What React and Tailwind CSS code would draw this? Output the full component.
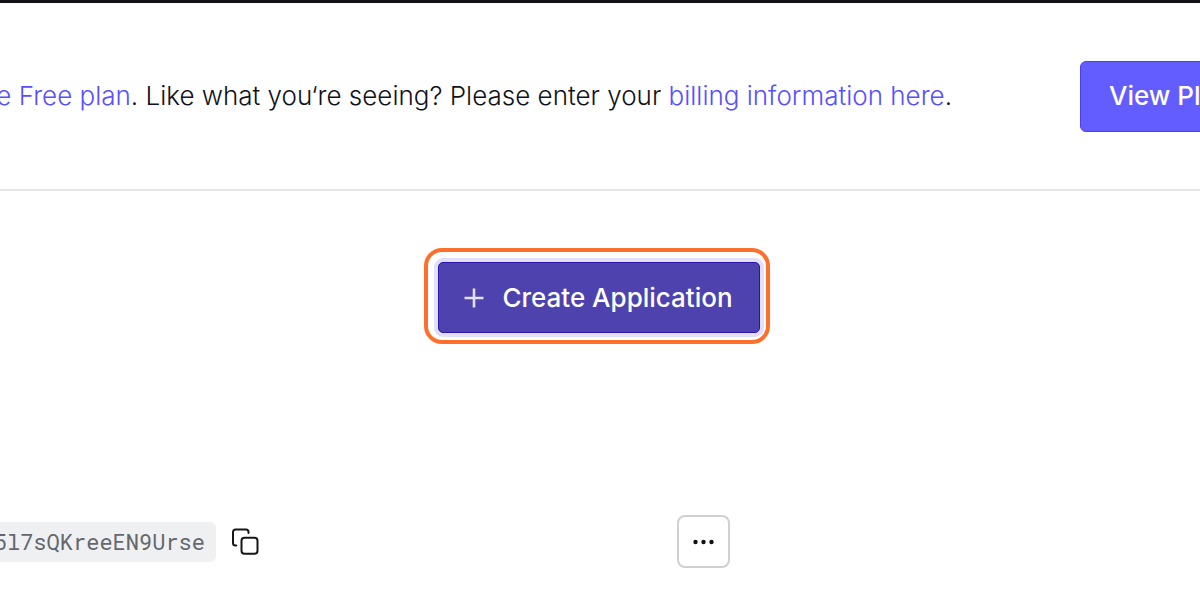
function CopyIcon() {
  return (
    <svg width="27" height="27" viewBox="0 0 27 27" fill="none" stroke="#16161a" strokeWidth="2" strokeLinecap="round" strokeLinejoin="round" aria-hidden="true">
      <rect x="9.500" y="9.800" width="16" height="16" rx="3" />
      <path d="M4.300 17.500H3.500a2.500 2.500 0 0 1-2.500-2.500V4A2.500 2.500 0 0 1 3.500 1.500h10.500A2.500 2.500 0 0 1 16.500 4v1" />
    </svg>
  );
}

function PlusIcon() {
  return (
    <svg width="20" height="20" viewBox="0 0 20 20" fill="none" stroke="#e4e1f5" strokeWidth="2.600" aria-hidden="true">
      <path d="M10 .5v19M.5 10h19" />
    </svg>
  );
}

function DotsIcon() {
  return (
    <svg width="24" height="6" viewBox="0 0 24 6" fill="#111114" aria-hidden="true">
      <circle cx="3.500" cy="3" r="2.200" />
      <circle cx="11.500" cy="3" r="2.200" />
      <circle cx="19.500" cy="3" r="2.200" />
    </svg>
  );
}

function PlanBanner() {
  return (
    <section className="flex h-[188px] items-center gap-32 border-b-2 border-[#e5e5e8]">
      <div className="flex min-w-0 flex-1 justify-end overflow-hidden">
        <p className="shrink-0 whitespace-nowrap text-[26px] font-light leading-8 text-[#10121a]">
          <a href="#plan" className="text-[#5850ff]">he Free plan</a>. Like what you‘re seeing? Please enter your{" "}
          <a href="#billing" className="text-[#5850ff]">billing information here</a>.
        </p>
      </div>
      <div className="w-[10%] shrink-0">
        <button type="button" className="h-[71px] whitespace-nowrap rounded-md border border-[#4b40ee] bg-[#635dff] px-7 text-[26px] font-medium leading-8 text-white">
          View Plans
        </button>
      </div>
    </section>
  );
}

export default function App() {
  return (
    <main className="overflow-hidden border-t-3 border-[#111116] bg-white font-['Inter',sans-serif]">
      <PlanBanner />
      <section className="flex justify-center pt-[57px] pr-[6px]">
        <div className="rounded-[18px] border-4 border-[#ff6f2c] pt-[10px] pr-[6px] pb-[7px] pl-[10px]">
          <button type="button" className="flex h-[71px] items-center gap-[18px] rounded-[5px] border border-[#2f13ad] bg-[#4d42ae] pr-[26px] pl-[25px] text-[26px] font-medium leading-8 text-white ring-4 ring-[#e1dffc]">
            <PlusIcon />
            Create Application
          </button>
        </div>
      </section>
      <section className="flex items-center pt-[171px] pb-6">
        <div className="flex w-[259px] items-center justify-end gap-4">
          <code className="shrink-0 rounded-md bg-[#eff0f2] px-[11px] py-1 font-['Roboto_Mono','Liberation_Mono',monospace] text-[22px] leading-8 text-[#65676e]">
            5l7sQKreeEN9Urse
          </code>
          <button type="button" aria-label="Copy client ID">
            <CopyIcon />
          </button>
        </div>
        <button type="button" aria-label="More actions" className="ml-[418px] flex size-[53px] items-center justify-center rounded-lg border-2 border-[#d0d0d4] bg-white">
          <DotsIcon />
        </button>
      </section>
    </main>
  );
}
